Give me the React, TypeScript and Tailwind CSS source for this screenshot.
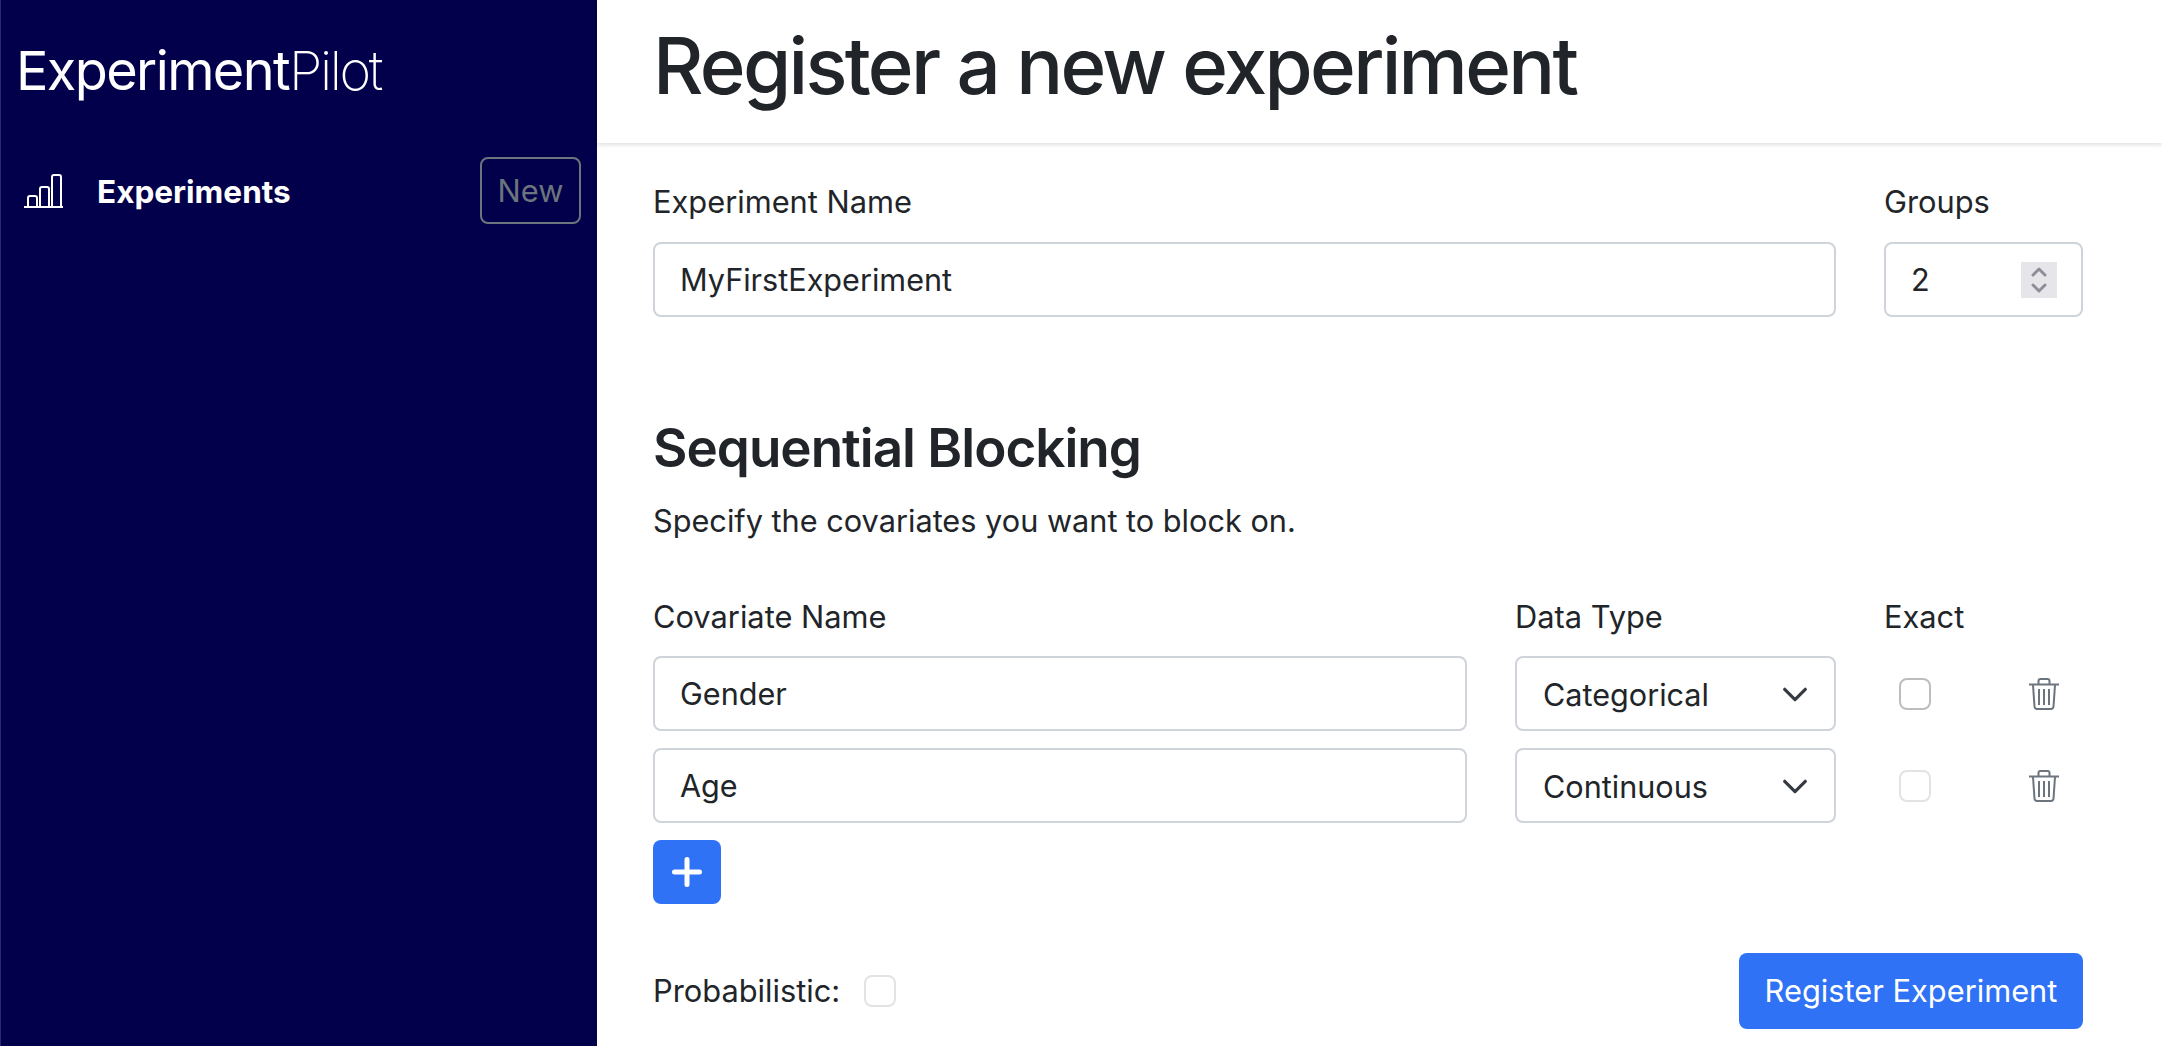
import React from 'react';

const inputClass =
  'h-[75px] w-full rounded-[8px] border-2 border-[#ced4da] bg-white px-[25px] text-[30.6px] text-[#212529] outline-none';

function BarChartIcon() {
  return (
    <svg viewBox="0 0 39 34" className="h-[34px] w-[39px]" fill="none" stroke="white" strokeWidth="2">
      <path d="M0 33h39" strokeLinecap="round" />
      <path d="M4 33V24a2 2 0 0 1 2-2h5a2 2 0 0 1 2 2v9" />
      <path d="M16 33V15a2 2 0 0 1 2-2h5a2 2 0 0 1 2 2v18" />
      <path d="M28 33V3a2 2 0 0 1 2-2h5a2 2 0 0 1 2 2v30" />
    </svg>
  );
}

function TrashIcon() {
  return (
    <svg viewBox="0 0 30 32" className="h-[32px] w-[30px]" fill="none" stroke="#6c757d" strokeWidth="2">
      <path d="M0 6.5h30" />
      <path d="M9.5 6V3a2 2 0 0 1 2-2h7a2 2 0 0 1 2 2v3" />
      <path d="M4 7l1.5 21.5a2.500 2.500 0 0 0 2.500 2.500h14a2.500 2.500 0 0 0 2.500-2.500L26 7" />
      <path d="M10 11v16M15 11v16M20 11v16" />
    </svg>
  );
}

function Checkbox({ disabled }: { disabled?: boolean }) {
  return (
    <input
      type="checkbox"
      disabled={disabled}
      className={`h-[32px] w-[32px] appearance-none rounded-[8px] border-2 bg-white ${disabled ? 'border-[#e3e3e3]' : 'border-[#bdbdbd]'}`}
    />
  );
}

function SelectBox({ value }: { value: string }) {
  return (
    <div className="flex h-[75px] w-[321px] items-center justify-between rounded-[8px] border-2 border-[#ced4da] bg-white pl-[26px] pr-[24px] text-[30.6px] text-[#212529]">
      <span className="pt-[2px]">{value}</span>
      <svg viewBox="0 0 16 16" className="h-[30px] w-[30px]" fill="none" stroke="#343a40" strokeWidth="1.7" strokeLinecap="round" strokeLinejoin="round">
        <path d="M2.500 5.500 8 11l5.500-5.500" />
      </svg>
    </div>
  );
}

function CovariateRow({ name, type, disabled }: { name: string; type: string; disabled?: boolean }) {
  return (
    <div className="flex items-center">
      <input className={`${inputClass} !w-[814px]`} defaultValue={name} />
      <div className="ml-[48px]">
        <SelectBox value={type} />
      </div>
      <div className="ml-[48px] flex w-[199px] items-center justify-between pl-[15px] pr-[24px]">
        <Checkbox disabled={disabled} />
        <TrashIcon />
      </div>
    </div>
  );
}

export default function App() {
  return (
    <div className="flex h-[1046px] overflow-hidden bg-white font-['Inter',sans-serif] text-[#212529]">
      {/* Sidebar */}
      <aside className="w-[597px] shrink-0 border-l border-[#2a2870] bg-[#02004a]">
        <div className="pl-[15px] pt-[38px] text-[54px] leading-[66px] tracking-[-1.6px] text-white">
          <span className="font-normal">Experiment</span>
          <span className="font-extralight tracking-[-2.4px]">Pilot</span>
        </div>
        <div className="mt-[53px] flex items-center pl-[23px] pr-[16px]">
          <BarChartIcon />
          <span className="ml-[34px] pt-[2px] text-[31.5px] font-bold text-white">Experiments</span>
          <button className="ml-auto h-[67px] w-[101px] rounded-[8px] border-2 border-[#6c757d] pt-[2px] text-[30.8px] text-[#6c757d]">
            New
          </button>
        </div>
      </aside>

      {/* Main */}
      <main className="min-w-0 flex-1">
        <header className="flex h-[143px] items-center pb-[12px] pl-[56px] shadow-[0_2px_4px_rgba(0,0,0,0.12)]">
          <h1 className="text-[78px] font-medium leading-none tracking-[-2.7px]">Register a new experiment</h1>
        </header>

        <div className="pl-[56px] pr-[79px]">
          <div className="mt-[39px] flex gap-[48px]">
            <div className="flex-1">
              <label className="block text-[30.8px] leading-[40px]">Experiment Name</label>
              <input className={`${inputClass} mt-[20px]`} defaultValue="MyFirstExperiment" />
            </div>
            <div className="w-[199px]">
              <label className="block text-[30.8px] leading-[40px]">Groups</label>
              <div className="mt-[20px] flex h-[75px] items-center justify-between rounded-[8px] border-2 border-[#ced4da] pl-[25px] pr-[24px] text-[30.6px]">
                <span>2</span>
                <div className="flex h-[36px] w-[36px] items-center justify-center bg-[#e6e6ea]">
                  <svg viewBox="0 0 36 36" className="h-[36px] w-[36px]" fill="none" stroke="#8e8e99" strokeWidth="3" strokeLinecap="round" strokeLinejoin="round">
                    <path d="M12 13l6-6 6 6M12 23l6 6 6-6" />
                  </svg>
                </div>
              </div>
            </div>
          </div>

          <h2 className="mt-[96px] text-[53px] font-semibold leading-[70px] tracking-[-1px]">Sequential Blocking</h2>
          <p className="mt-[18px] text-[30.7px] leading-[40px]">Specify the covariates you want to block on.</p>

          <div className="mt-[56px] flex text-[30.8px] leading-[40px]">
            <span className="w-[862px]">Covariate Name</span>
            <span className="w-[369px]">Data Type</span>
            <span>Exact</span>
          </div>

          <div className="mt-[19px] flex flex-col gap-[17px]">
            <CovariateRow name="Gender" type="Categorical" />
            <CovariateRow name="Age" type="Continuous" disabled />
          </div>

          <button className="mt-[17px] flex h-[64px] w-[68px] items-center justify-center rounded-[8px] bg-[#2f72f5]">
            <svg viewBox="0 0 32 32" className="h-[32px] w-[32px]" fill="none" stroke="white" strokeWidth="5" strokeLinecap="round">
              <path d="M16 3.500v25M3.500 16h25" />
            </svg>
          </button>

          <div className="mt-[49px] flex items-center justify-between">
            <div className="flex items-center gap-[24px]">
              <span className="text-[30.8px]">Probabilistic:</span>
              <Checkbox disabled />
            </div>
            <button className="h-[76px] w-[344px] rounded-[8px] bg-[#2f72f5] text-[30.8px] text-white">
              Register Experiment
            </button>
          </div>
        </div>
      </main>
    </div>
  );
}
